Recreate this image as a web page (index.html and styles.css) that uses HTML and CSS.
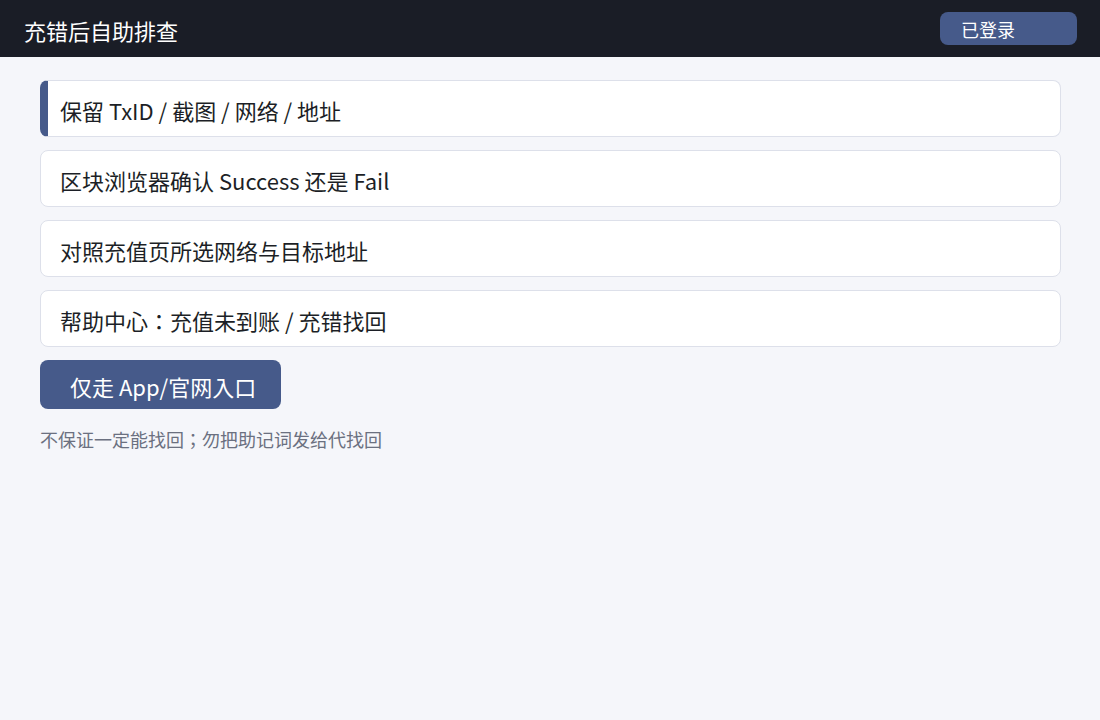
FILE: index.html
```html
<!DOCTYPE html>
<html>
<head>
<meta charset="utf-8">
<title>充错后自助排查</title>
<link rel="stylesheet" href="styles.css">
</head>
<body>
<header class="topbar">
  <h1 class="title">充错后自助排查</h1>
  <span class="badge">已登录</span>
</header>
<main class="content">
  <ul class="steps">
    <li class="step step-active">保留 TxID / 截图 / 网络 / 地址</li>
    <li class="step">区块浏览器确认 Success 还是 Fail</li>
    <li class="step">对照充值页所选网络与目标地址</li>
    <li class="step">帮助中心：充值未到账 / 充错找回</li>
  </ul>
  <button class="primary" type="button">仅走 App/官网入口</button>
  <p class="note">不保证一定能找回；勿把助记词发给代找回</p>
</main>
</body>
</html>
```

FILE: styles.css
```css
* { box-sizing: border-box; }
html, body { margin: 0; padding: 0; }
body {
  width: 1100px;
  height: 720px;
  background: #f5f6fa;
  font-family: "Noto Sans CJK JP", "Noto Sans", sans-serif;
  color: #1c1f26;
}
.topbar {
  height: 57px;
  background: #1a1d26;
  display: flex;
  align-items: flex-start;
  justify-content: space-between;
  padding: 0 23px 0 24px;
}
.title {
  margin: 14px 0 0;
  font-size: 22px;
  line-height: 32px;
  font-weight: 400;
  color: #ffffff;
}
.badge {
  width: 137px;
  height: 33px;
  margin-top: 12px;
  background: #465a8a;
  border-radius: 8px;
  color: #ffffff;
  font-size: 18px;
  line-height: 35px;
  padding-left: 21px;
}
.content {
  padding: 23px 39px 0 40px;
}
.steps {
  list-style: none;
  margin: 0;
  padding: 0;
  display: flex;
  flex-direction: column;
  gap: 13px;
}
.step {
  height: 57px;
  background: #ffffff;
  border: 1px solid #dde0ea;
  border-radius: 8px;
  padding: 14px 0 0 19px;
  font-size: 22px;
  line-height: 30px;
  color: #1c1f26;
}
.step-active {
  border-left: 8px solid #465a8a;
  padding-left: 12px;
}
.primary {
  margin-top: 13px;
  width: 241px;
  height: 49px;
  border: none;
  border-radius: 8px;
  background: #465a8a;
  color: #ffffff;
  font-family: inherit;
  font-size: 22px;
  line-height: 30px;
  text-align: left;
  padding: 3px 0 0 30px;
  display: block;
}
.note {
  margin: 17px 0 0;
  font-size: 18px;
  color: #6b7080;
}
```
